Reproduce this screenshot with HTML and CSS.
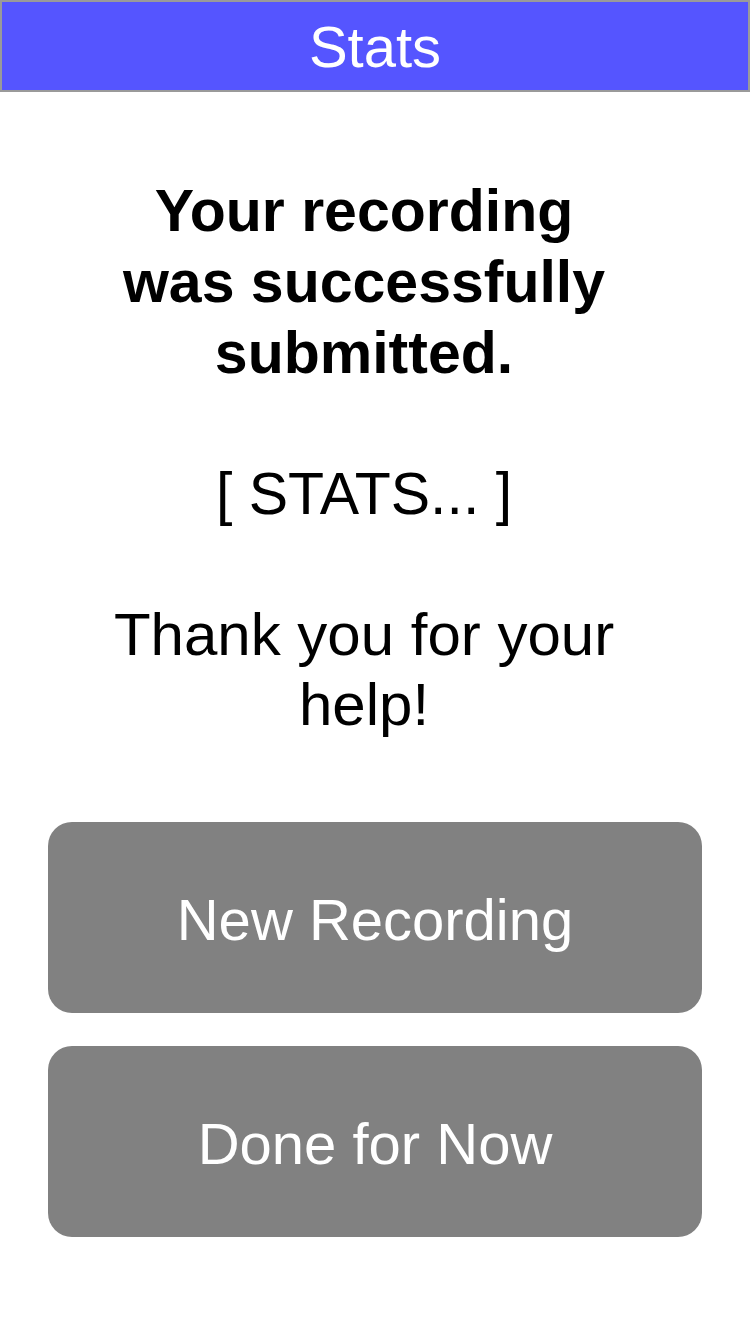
FILE: index.html
```html
<!DOCTYPE html>
<html lang="en">
<head>
<meta charset="utf-8">
<title>Stats</title>
<link rel="stylesheet" href="styles.css">
</head>
<body>
<header class="bar"><span class="bar-title">Stats</span></header>
<main class="content">
  <div class="message">
    <h1 class="headline">Your recording was successfully submitted.</h1>
    <p class="stats">[ STATS... ]</p>
    <p class="thanks">Thank you for your help!</p>
  </div>
  <div class="actions">
    <button class="btn" type="button">New Recording</button>
    <button class="btn" type="button">Done for Now</button>
  </div>
</main>
</body>
</html>
```
FILE: styles.css
```css
html, body {
  margin: 0;
  padding: 0;
  background: #ffffff;
}
body {
  font-family: "Liberation Sans", Arial, Helvetica, sans-serif;
  width: 750px;
  height: 1334px;
  overflow: hidden;
}
.bar {
  box-sizing: border-box;
  height: 92px;
  background: #5555ff;
  border: 2px solid #9a9a9a;
  display: flex;
  align-items: center;
  justify-content: center;
}
.bar-title {
  color: #ffffff;
  font-size: 58px;
  line-height: 1;
  margin-top: 2px;
}
.content {
  display: flex;
  flex-direction: column;
  padding-top: 84px;
}
.message {
  box-sizing: border-box;
  padding: 0 122px 0 100px;
  text-align: center;
  color: #000000;
}
.headline {
  margin: 0;
  font-size: 59px;
  font-weight: bold;
  line-height: 71px;
}
.stats {
  margin: 70px 0 0;
  font-size: 59px;
  line-height: 71px;
}
.thanks {
  margin: 70px 0 0;
  font-size: 60px;
  line-height: 70px;
}
.actions {
  display: flex;
  flex-direction: column;
  gap: 33px;
  padding: 0 48px;
  margin-top: 82px;
}
.btn {
  box-sizing: border-box;
  height: 191px;
  border: none;
  border-radius: 24px;
  background: #818181;
  color: #ffffff;
  font-family: "Liberation Sans", Arial, Helvetica, sans-serif;
  font-size: 58px;
  padding: 4px 0 0;
  cursor: pointer;
}
```
